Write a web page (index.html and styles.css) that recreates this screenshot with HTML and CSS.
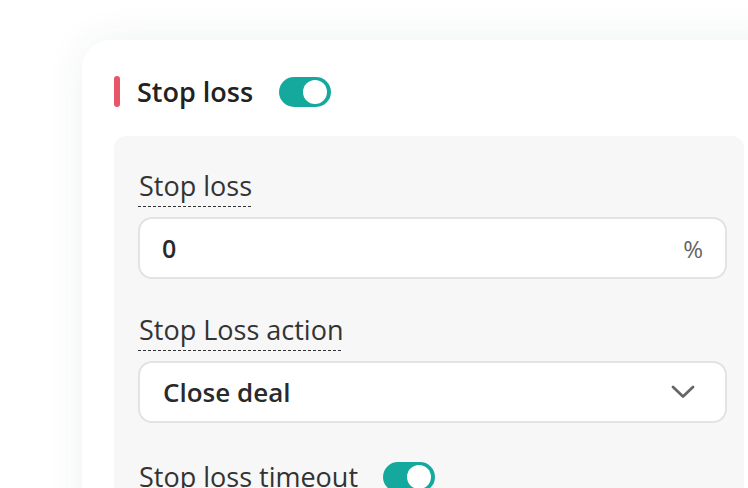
FILE: index.html
```html
<!DOCTYPE html>
<html>
<head>
<meta charset="utf-8">
<link rel="stylesheet" href="styles.css">
</head>
<body>
<div class="stage">
  <div class="card">
    <div class="head">
      <span class="bar"></span>
      <span class="title">Stop loss</span>
      <span class="toggle"><span class="knob"></span></span>
    </div>
    <div class="panel">
      <div class="group">
        <span class="label">Stop loss</span>
        <div class="field">
          <span class="value">0</span>
          <span class="unit">%</span>
        </div>
      </div>
      <div class="group">
        <span class="label">Stop Loss action</span>
        <div class="field select">
          <span class="value">Close deal</span>
          <svg class="chev" width="24" height="14" viewBox="0 0 24 14"><polyline points="2,2 12,11.5 22,2" fill="none" stroke="#666" stroke-width="2.8" stroke-linecap="round" stroke-linejoin="round"/></svg>
        </div>
      </div>
      <div class="group row">
        <span class="plain">Stop loss timeout</span>
        <span class="toggle"><span class="knob"></span></span>
      </div>
    </div>
  </div>
</div>
</body>
</html>
```
FILE: styles.css
```css
html, body {
  margin: 0;
  padding: 0;
  background: #ffffff;
  overflow: hidden;
  width: 748px;
  height: 488px;
}
body {
  font-family: "Open Sans", "Noto Sans", sans-serif;
  color: #333;
}
.stage {
  padding: 40px 0 0 82px;
}
.card {
  width: 720px;
  height: 620px;
  box-sizing: border-box;
  background: #fff;
  border-radius: 28px;
  padding: 36px 0 0 32px;
  box-shadow: 0 0 40px rgba(20, 50, 70, 0.07);
}
.head {
  display: flex;
  align-items: center;
  height: 31px;
}
.bar {
  width: 6px;
  height: 31px;
  border-radius: 3px;
  background: #e8566a;
  margin-right: 17px;
}
.title {
  font-size: 27px;
  font-weight: 600;
  color: #222;
  line-height: 31px;
}
.toggle {
  position: relative;
  display: inline-block;
  width: 52px;
  height: 30px;
  border-radius: 15px;
  background: #15a99e;
  margin-left: 26px;
}
.knob {
  position: absolute;
  right: 4px;
  top: 3px;
  width: 24px;
  height: 24px;
  border-radius: 50%;
  background: #fff;
}
.panel {
  margin-top: 29px;
  width: 630px;
  height: 400px;
  box-sizing: border-box;
  background: #f7f7f7;
  border-radius: 12px;
  padding: 33px 17px 0 24px;
}
.group + .group {
  margin-top: 34px;
}
.group.row {
  margin-top: 37px;
  display: flex;
  align-items: center;
}
.label {
  display: inline-block;
  font-size: 27px;
  line-height: 34px;
  padding-bottom: 5px;
  padding-left: 1px;
  color: #333;
  background-image: linear-gradient(to right, #333 60%, transparent 60%);
  background-size: 5px 1px;
  background-repeat: repeat-x;
  background-position: left bottom 1px;
}
.plain {
  font-size: 27px;
  line-height: 34px;
  padding-left: 1px;
  color: #333;
}
.row .toggle {
  margin-left: 25px;
}
.field {
  margin-top: 9px;
  height: 62px;
  box-sizing: border-box;
  border: 2px solid #e3e3e3;
  border-radius: 14px;
  background: #fff;
  display: flex;
  align-items: center;
  justify-content: space-between;
  padding: 0 22px 0 22px;
}
.value {
  font-size: 25px;
  font-weight: 600;
  color: #2a2a2a;
}
.select .value {
  padding-left: 1px;
  font-size: 26px;
}
.unit {
  font-size: 24px;
  color: #666;
}
.select {
  padding-right: 30px;
}
.chev {
  display: block;
}
```
